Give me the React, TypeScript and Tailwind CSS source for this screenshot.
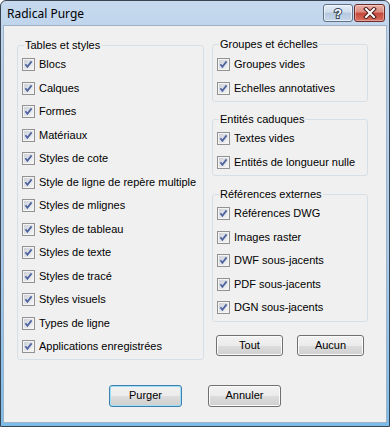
import React from "react";

const leftItems = [
  "Blocs",
  "Calques",
  "Formes",
  "Matériaux",
  "Styles de cote",
  "Style de ligne de repère multiple",
  "Styles de mlignes",
  "Styles de tableau",
  "Styles de texte",
  "Styles de tracé",
  "Styles visuels",
  "Types de ligne",
  "Applications enregistrées",
];

function CheckBox() {
  return (
    <svg width="13" height="13" viewBox="0 0 13 13" className="shrink-0">
      <defs>
        <linearGradient id="cbg" x1="0" y1="0" x2="1" y2="1">
          <stop offset="0" stopColor="#cdd1d8" />
          <stop offset="1" stopColor="#f5f5f5" />
        </linearGradient>
      </defs>
      <rect x="0.5" y="0.5" width="12" height="12" fill="#f4f4f4" stroke="#929292" />
      <rect x="2" y="2" width="9" height="9" fill="url(#cbg)" />
      <path d="M3.4 6.3 L5.4 8.8 L9.6 3.4" fill="none" stroke="#4f64a0" strokeWidth="1.8" />
    </svg>
  );
}

function Row({ label }: { label: string }) {
  return (
    <div className="h-[23.5px] flex items-center pl-[4px]">
      <CheckBox />
      <span className="ml-[4px] text-[11px] leading-[13px] text-black whitespace-nowrap">{label}</span>
    </div>
  );
}

function Group({
  title,
  items,
  className,
  pt,
}: {
  title: string;
  items: string[];
  className: string;
  pt: string;
}) {
  return (
    <fieldset className={`border border-[#d5dfe5] rounded-[3px] ${className}`}>
      <legend className="ml-[6px] px-[1px] text-[11px] leading-[13px] text-black">{title}</legend>
      <div className={pt}>
        {items.map((t) => (
          <Row key={t} label={t} />
        ))}
      </div>
    </fieldset>
  );
}

function Btn({ label, def, size }: { label: string; def?: boolean; size: string }) {
  return (
    <button
      className={`${size} rounded-[3px] border text-[11px] leading-[13px] text-black flex items-center justify-center bg-[linear-gradient(to_bottom,#f2f2f2_0%,#ebebeb_50%,#dddddd_51%,#cfcfcf_100%)] ${
        def
          ? "border-[#3c7fb1] shadow-[inset_0_0_0_1px_#9fe0f8]"
          : "border-[#707070] shadow-[inset_0_0_0_1px_#fbfbfb]"
      }`}
    >
      {label}
    </button>
  );
}

export default function App() {
  return (
    <div className="w-[390px] h-[427px] flex flex-col border border-[#3a4553] rounded-t-[6px] bg-[linear-gradient(to_bottom,#c6d9ee_0%,#b7d0ea_15%,#a9c9e9_60%,#7cbce9_100%)] font-['Liberation_Sans',Arial,sans-serif] overflow-hidden">
      {/* Title bar */}
      <div className="h-[24px] shrink-0 flex items-start justify-between pl-[6px] pr-[4px]">
        <span className="mt-[5px] text-[12px] leading-[15px] text-black font-['Noto_Sans',sans-serif]">
          Radical Purge
        </span>
        <div className="flex mt-[3px] gap-[1px]">
          <div className="w-[30px] h-[18px] rounded-[3px] border border-[#5f7186] bg-[linear-gradient(to_bottom,#e6eef7_0%,#cfdcec_45%,#b4c8de_50%,#c7d8eb_100%)] shadow-[inset_0_0_0_1px_rgba(255,255,255,0.6)] flex items-center justify-center">
            <svg width="12" height="14" viewBox="0 0 12 14">
              <text
                x="6"
                y="12"
                textAnchor="middle"
                fontSize="13"
                fontWeight="bold"
                fontFamily="Liberation Sans, Arial, sans-serif"
                fill="#ffffff"
                stroke="#38475a"
                strokeWidth="2"
                paintOrder="stroke"
              >
                ?
              </text>
            </svg>
          </div>
          <div className="w-[31px] h-[18px] rounded-[3px] border border-[#6e2a26] bg-[linear-gradient(to_bottom,#eab1a6_0%,#d98a7c_45%,#c5473a_50%,#d66f5f_100%)] shadow-[inset_0_0_0_1px_rgba(255,255,255,0.35)] flex items-center justify-center">
            <svg width="14" height="12" viewBox="0 0 14 12">
              <path d="M3 2 L11 10 M11 2 L3 10" stroke="#4a1a16" strokeWidth="4" strokeLinecap="square" />
              <path d="M3 2 L11 10 M11 2 L3 10" stroke="#ffffff" strokeWidth="2" strokeLinecap="square" />
            </svg>
          </div>
        </div>
      </div>

      {/* Client area */}
      <div className="flex-1 ml-[2px] mr-[2px] mb-[3px] bg-[#f0f0f0] border border-[#9fb3c8] pt-[12px] flex flex-col">
        <div className="flex items-start pl-[13px] gap-[8px]">
          <Group title="Tables et styles" items={leftItems} className="w-[187px] mt-[1px]" pt="pt-[1px] pb-0" />
          <div className="w-[156px] flex flex-col">
            <Group
              title="Groupes et échelles"
              items={["Groupes vides", "Echelles annotatives"]}
              className="w-[156px]"
              pt="pt-[2px] pb-[1px]"
            />
            <Group
              title="Entités caduques"
              items={["Textes vides", "Entités de longueur nulle"]}
              className="w-[156px] mt-[11px]"
              pt="pt-[1px] pb-[1px]"
            />
            <Group
              title="Références externes"
              items={[
                "Références DWG",
                "Images raster",
                "DWF sous-jacents",
                "PDF sous-jacents",
                "DGN sous-jacents",
              ]}
              className="w-[156px] mt-[12px]"
              pt="pt-[1px] pb-[1px]"
            />
            <div className="flex gap-[14px] pl-[4px] mt-[13px]">
              <Btn label="Tout" size="w-[67px] h-[21px]" />
              <Btn label="Aucun" size="w-[67px] h-[21px]" />
            </div>
          </div>
        </div>
        <div className="flex justify-center gap-[26px] mt-[25px]">
          <Btn label="Purger" def size="w-[73px] h-[22px]" />
          <Btn label="Annuler" size="w-[73px] h-[22px]" />
        </div>
      </div>
    </div>
  );
}
